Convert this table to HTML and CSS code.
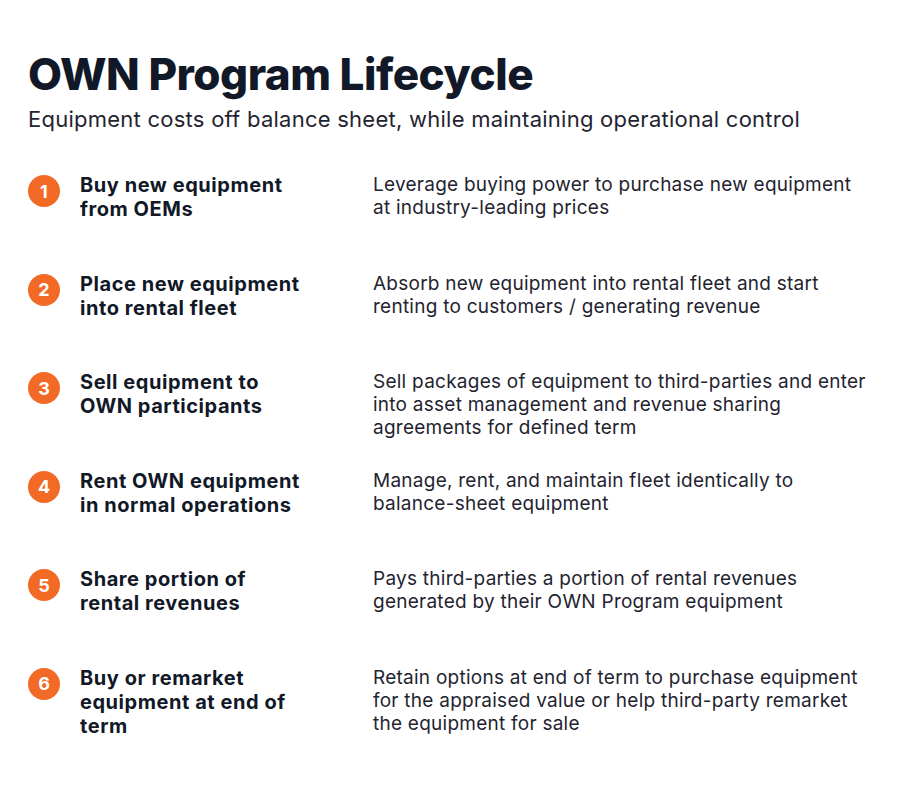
FILE: index.html
```html
<!DOCTYPE html>
<html lang="en">
<head>
<meta charset="utf-8">
<title>OWN Program Lifecycle</title>
<link rel="stylesheet" href="styles.css">
</head>
<body>
<main class="page">
  <header class="head">
    <h1 class="title">OWN Program Lifecycle</h1>
    <p class="subtitle">Equipment costs off balance sheet, while maintaining operational control</p>
  </header>
  <ol class="steps">
    <li class="step">
      <span class="num">1</span>
      <h2 class="step-title">Buy new equipment<br>from OEMs</h2>
      <p class="step-desc">Leverage buying power to purchase new equipment<br>at industry-leading prices</p>
    </li>
    <li class="step">
      <span class="num">2</span>
      <h2 class="step-title">Place new equipment<br>into rental fleet</h2>
      <p class="step-desc">Absorb new equipment into rental fleet and start<br>renting to customers / generating revenue</p>
    </li>
    <li class="step">
      <span class="num">3</span>
      <h2 class="step-title">Sell equipment to<br>OWN participants</h2>
      <p class="step-desc">Sell packages of equipment to third-parties and enter<br>into asset management and revenue sharing<br>agreements for defined term</p>
    </li>
    <li class="step">
      <span class="num">4</span>
      <h2 class="step-title">Rent OWN equipment<br>in normal operations</h2>
      <p class="step-desc">Manage, rent, and maintain fleet identically to<br>balance-sheet equipment</p>
    </li>
    <li class="step">
      <span class="num">5</span>
      <h2 class="step-title">Share portion of<br>rental revenues</h2>
      <p class="step-desc">Pays third-parties a portion of rental revenues<br>generated by their OWN Program equipment</p>
    </li>
    <li class="step">
      <span class="num">6</span>
      <h2 class="step-title">Buy or remarket<br>equipment at end of<br>term</h2>
      <p class="step-desc">Retain options at end of term to purchase equipment<br>for the appraised value or help third-party remarket<br>the equipment for sale</p>
    </li>
  </ol>
</main>
</body>
</html>
```

FILE: styles.css
```css
* { box-sizing: border-box; }
html, body {
  margin: 0;
  padding: 0;
  background: #ffffff;
}
body {
  font-family: Inter, "Noto Sans", "Liberation Sans", sans-serif;
  color: #111827;
}
.page {
  padding: 50px 10px 0 28px;
}
.head {
  display: flex;
  flex-direction: column;
  gap: 8px;
}
.title {
  margin: 0;
  font-size: 44px;
  line-height: 48px;
  font-weight: 800;
  letter-spacing: -0.5px;
  color: #111827;
}
.subtitle {
  margin: 0;
  font-size: 22px;
  line-height: 26px;
  font-weight: 400;
  letter-spacing: 0.25px;
  color: #1f2430;
}
.steps {
  list-style: none;
  margin: 41px 0 0 0;
  padding: 0;
  display: grid;
  grid-auto-rows: 98.5px;
}
.step {
  display: grid;
  grid-template-columns: 32px 292px 1fr;
  align-items: start;
}
.num {
  width: 32px;
  height: 32px;
  margin-top: 2px;
  border-radius: 50%;
  background: #f26a25;
  color: #ffffff;
  font-weight: 700;
  font-size: 18px;
  display: flex;
  align-items: center;
  justify-content: center;
}
.step-title {
  margin: 0 0 0 20px;
  font-size: 20px;
  line-height: 24px;
  font-weight: 700;
  letter-spacing: 0.55px;
  color: #111827;
  white-space: nowrap;
}
.step-desc {
  margin: 0 0 0 21px;
  font-size: 19px;
  line-height: 23px;
  font-weight: 400;
  letter-spacing: 0.25px;
  color: #1f2430;
  white-space: nowrap;
}
```
